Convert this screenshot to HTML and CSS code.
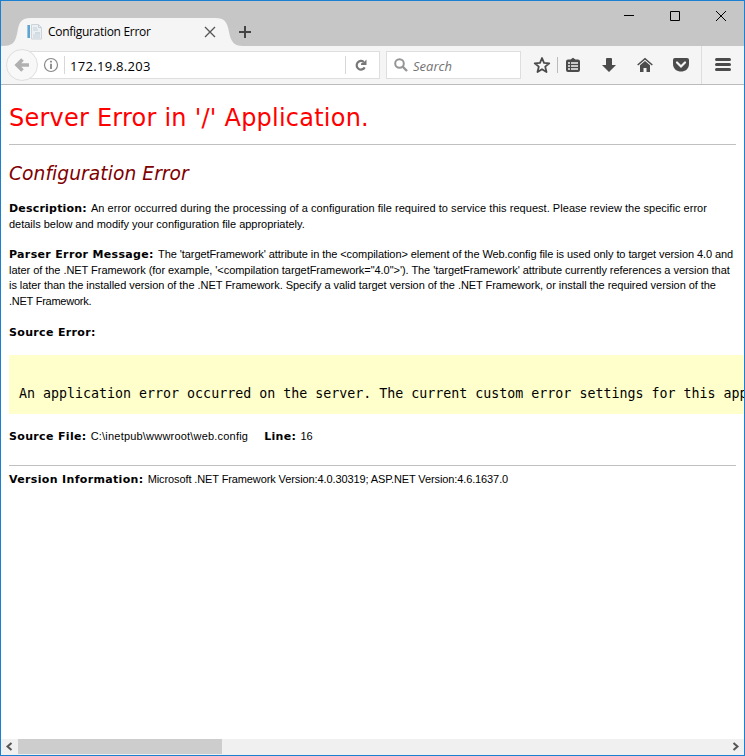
FILE: index.html
```html
<!DOCTYPE html>
<html lang="en">
<head>
<meta charset="utf-8">
<title>Configuration Error</title>
<link rel="stylesheet" href="styles.css">
</head>
<body>
<div class="window">
  <header class="tabbar">
    <div class="tab">
      <svg class="tab-shape" width="246" height="28" viewBox="0 0 246 28"><path d="M0 28C10 28 13 25 15 16C17 5 18 0 29 0H213C223 0 225 4 227 14C229 24 232 28 241 28Z" fill="#f5f5f5"/></svg>
      <svg class="favicon" width="16" height="16" viewBox="0 0 16 16"><path d="M1 1h3v13H1z" fill="#5fa4cf"/><path d="M1 1h1v13H1z" fill="#98c6df"/><path d="M5.500.500h7l3 3v11.500h-10z" fill="#eaf0f4" stroke="#ccd4da"/><path d="M12.500.500v3h3M7 4h4M7 6h5M7 11h7M7 13h7" fill="none" stroke="#c5d0d8"/><path d="M9 8h5v2H9z" fill="#d0dae1"/></svg>
      <span class="tab-title">Configuration Error</span>
      <svg class="tab-close" width="12" height="12" viewBox="0 0 12 12"><path d="M1 1l10 10M11 1L1 11" stroke="#555" stroke-width="1.300"/></svg>
    </div>
    <svg class="new-tab" width="12" height="12" viewBox="0 0 12 12"><path d="M6 0v12M0 6h12" stroke="#444" stroke-width="2"/></svg>
    <div class="controls">
      <svg width="46" height="30" viewBox="0 0 46 30"><path d="M18 14.500h10" stroke="#000"/></svg>
      <svg width="46" height="30" viewBox="0 0 46 30"><path d="M18.500 10.500h9v9h-9z" fill="none" stroke="#000"/></svg>
      <svg width="46" height="30" viewBox="0 0 46 30"><path d="M18 10l10 10M28 10L18 20" stroke="#000"/></svg>
    </div>
  </header>
  <nav class="toolbar">
    <div class="back"><svg width="32" height="32" viewBox="0 0 32 32"><circle cx="16" cy="16" r="15.500" fill="#f8f8f8" stroke="#dedede"/><path d="M16.500 10.500L11 16l5.500 5.500M11 16h12" fill="none" stroke="#b0b0b0" stroke-width="3.600"/></svg></div>
    <div class="address">
      <svg width="16" height="16" viewBox="0 0 16 16"><circle cx="8" cy="8" r="6.500" fill="none" stroke="#888" stroke-width="1.200"/><path d="M8 3.700v1.700M8 6.700v5.300" stroke="#777" stroke-width="1.600"/></svg>
      <i class="rule info-rule"></i>
      <span class="url">172.19.8.203</span>
      <i class="rule"></i>
      <svg class="reload" width="14" height="14" viewBox="0 0 14 14"><path d="M9.800 4A4.300 4.300 0 1 0 10.700 9.400" fill="none" stroke="#777" stroke-width="2.200"/><path d="M7 7V5.500L10 4l2.500-2.500V7z" fill="#777"/></svg>
    </div>
    <div class="search">
      <svg width="16" height="16" viewBox="0 0 16 16"><circle cx="6.500" cy="6.500" r="4.300" fill="none" stroke="#959595" stroke-width="2"/><path d="M9.500 9.500L14 14" stroke="#959595" stroke-width="2.400"/></svg>
      <span>Search</span>
    </div>
    <div class="tools">
      <svg class="star" width="18" height="18" viewBox="0 0 18 18"><path d="M9 2l2 4.900 5.300.4-4.100 3.300L13.500 16 9 13.200 4.500 16l1.300-5.400-4.100-3.300L7 6.900z" fill="none" stroke="#4b4b4b" stroke-width="1.800" stroke-linejoin="round"/></svg>
      <i class="rule tool-rule"></i>
      <svg class="list" width="16" height="16" viewBox="0 0 16 16"><path d="M3 2.500h2.500L8 .700l2.500 1.800H13q2 0 2 2V13q0 2-2 2H3q-2 0-2-2V4.500q0-2 2-2z" fill="#4b4b4b"/><path d="M3 6h2M6 6h7M3 9h2M6 9h7M3 12h2M6 12h7" stroke="#f5f5f5" stroke-width="1.600"/></svg>
      <svg class="download" width="16" height="16" viewBox="0 0 16 16"><path d="M5 2q0-1 1-1h4q1 0 1 1v6h4l-7 7-7-7h4z" fill="#4b4b4b"/></svg>
      <svg class="home" width="16" height="16" viewBox="0 0 16 16"><path d="M.700 8L8 1.700 15.300 8" fill="none" stroke="#4b4b4b" stroke-width="1.600"/><path d="M3 8.200L8 4l5 4.200V15H9.500v-4h-3v4H3z" fill="#4b4b4b"/></svg>
      <svg class="pocket" width="18" height="16" viewBox="0 0 18 16"><path d="M3 1h12q2 0 2 2v4c0 10-16 10-16 0V3q0-2 2-2z" fill="#4b4b4b"/><path d="M5 5.500l4 4 4-4" fill="none" stroke="#f5f5f5" stroke-width="2.200" stroke-linecap="round"/></svg>
    </div>
    <div class="menu"><svg width="16" height="14" viewBox="0 0 16 14"><path d="M1.500 1.500h13M1.500 6.500h13M1.500 11.500h13" stroke="#4b4b4b" stroke-width="3" stroke-linecap="round"/></svg></div>
  </nav>
  <main>
    <h1><span>Server Error in '/' Application.</span></h1>
    <hr>
    <h2><span>Configuration Error</span></h2>
    <p class="description"><span class="line l1"><b>Description: </b>An error occurred during the processing of a configuration file required to service this request. Please review the specific error</span><span class="line l2">details below and modify your configuration file appropriately.</span></p>
    <p class="parser"><span class="line l3"><b>Parser Error Message: </b>The 'targetFramework' attribute in the &lt;compilation&gt; element of the Web.config file is used only to target version 4.0 and</span><span class="line l4">later of the .NET Framework (for example, '&lt;compilation targetFramework="4.0"&gt;'). The 'targetFramework' attribute currently references a version that</span><span class="line l5">is later than the installed version of the .NET Framework. Specify a valid target version of the .NET Framework, or install the required version of the</span><span class="line l6">.NET Framework.</span></p>
    <p class="source"><b>Source Error:</b></p>
    <pre>An application error occurred on the server. The current custom error settings for this app</pre>
    <p class="file"><span class="path"><b>Source File: </b>C:\inetpub\wwwroot\web.config</span><span><b>Line: </b>16</span></p>
    <hr>
    <p class="version"><b>Version Information: </b><span>Microsoft .NET Framework Version:4.0.30319; ASP.NET Version:4.6.1637.0</span></p>
  </main>
  <footer class="scrollbar">
    <svg width="17" height="16" viewBox="0 0 17 16"><path d="M10.500 4l-4 3.500 4 3.500" fill="none" stroke="#555" stroke-width="2"/></svg>
    <div class="track"><div class="thumb"></div></div>
    <svg width="17" height="16" viewBox="0 0 17 16"><path d="M6.500 4l4 3.500-4 3.500" fill="none" stroke="#555" stroke-width="2"/></svg>
  </footer>
</div>
</body>
</html>
```
FILE: styles.css
```css
* { box-sizing: border-box; }
body { margin: 0; background: #fff; color: #000; font-family: "Liberation Sans", sans-serif; }
svg { display: block; flex: none; }
.window { width: 745px; height: 756px; border: 1px solid #1b80d2; display: flex; flex-direction: column; overflow: hidden; }
.tabbar { height: 45px; flex: none; background: #c6c6c6; display: flex; }
.tab { position: relative; width: 230px; height: 28px; margin: 17px 0 0 1px; display: flex; align-items: center; }
.tab-shape { position: absolute; left: 0; top: 0; }
.favicon, .tab-title, .tab-close { position: relative; }
.favicon { margin-left: 24px; }
.tab-title { width: 157px; margin-left: 6px; font: 12px/18px "Open Sans", sans-serif; letter-spacing: -.3px; }
.tab-close { margin-left: -1px; }
.new-tab { position: relative; margin: 25px 0 0 7px; }
.controls { margin-left: auto; display: flex; width: 138px; }
.toolbar { height: 39px; flex: none; background: #f5f5f5; border-bottom: 1px solid #bbb; display: flex; align-items: center; }
.back { z-index: 1; margin-left: 5px; width: 32px; }
.address { width: 358px; height: 28px; margin-left: -16px; padding-left: 20px; background: #fff; border: 1px solid #dedede; display: flex; align-items: center; }
.rule { width: 1px; height: 18px; background: #d7d7d7; flex: none; }
.info-rule { margin: 0 5px 0 5px; }
.url { width: 275px; padding-top: 1px; font: 13px/20px "Open Sans", sans-serif; letter-spacing: .3px; }
.url { letter-spacing: .3px; }
.reload { margin-left: 8px; }
.search { width: 135px; height: 28px; margin-left: 6px; padding-left: 6px; border: 1px solid #dedede; background: #fff; display: flex; align-items: center; color: #737373; font: italic 13px/20px "Open Sans", sans-serif; }
.search span { margin-left: 4px; padding-top: 1px; }
.tools { display: flex; align-items: center; width: 180px; padding-left: 12px; }
.tool-rule { margin-left: 6px; height: 16px; background: #bbb; }
.list { margin-left: 7px; }
.download, .home { margin-left: 20px; }
.pocket { margin-left: 19px; }
.menu { height: 38px; border-left: 1px solid #ddd; padding-left: 13px; display: flex; align-items: center; }
main { flex: 1; min-height: 0; padding: 0 8px; overflow: hidden; }
h1, h2, p, pre { margin: 0; }
h1 { height: 59px; padding-top: 17px; font: 24px/32px "DejaVu Sans", sans-serif; color: red; letter-spacing: .23px; white-space: nowrap; }
hr { border: 0; height: 1px; margin: 0; background: silver; }
h2 { height: 56px; padding-top: 17px; font: italic 18.67px/24px "DejaVu Sans", sans-serif; color: maroon; letter-spacing: .06px; }
p { font-size: 11px; line-height: 15.5px; white-space: nowrap; }
b { font: bold 11px/15px "DejaVu Sans", sans-serif; letter-spacing: .34px; }
.line { display: block; width: max-content; }
.l1 { letter-spacing: .04px; }
.l1 b { letter-spacing: .2px; }
.l2 { letter-spacing: -.02px; }
.l3 { letter-spacing: -.075px; }
.l4 { letter-spacing: -.047px; }
.l5 { letter-spacing: -.053px; }
.l6 { letter-spacing: -.25px; }
.description { height: 46px; }
.parser { height: 78px; }
.source { height: 30px; }
pre { height: 59px; margin-right: -8px; padding: 30px 0 0 10px; background: #ffc; font: 13.3px/18px "DejaVu Sans Mono", monospace; }
.file { display: flex; gap: 16px; height: 51px; padding-top: 15px; }
.path { letter-spacing: .2px; }
.version { padding-top: 6px; }
.version span { letter-spacing: -.11px; }
.scrollbar { display: flex; height: 16px; flex: none; background: #f0f0f0; }
.track { flex: 1; height: 15px; }
.thumb { width: 204px; height: 15px; background: #cdcdcd; }
```
